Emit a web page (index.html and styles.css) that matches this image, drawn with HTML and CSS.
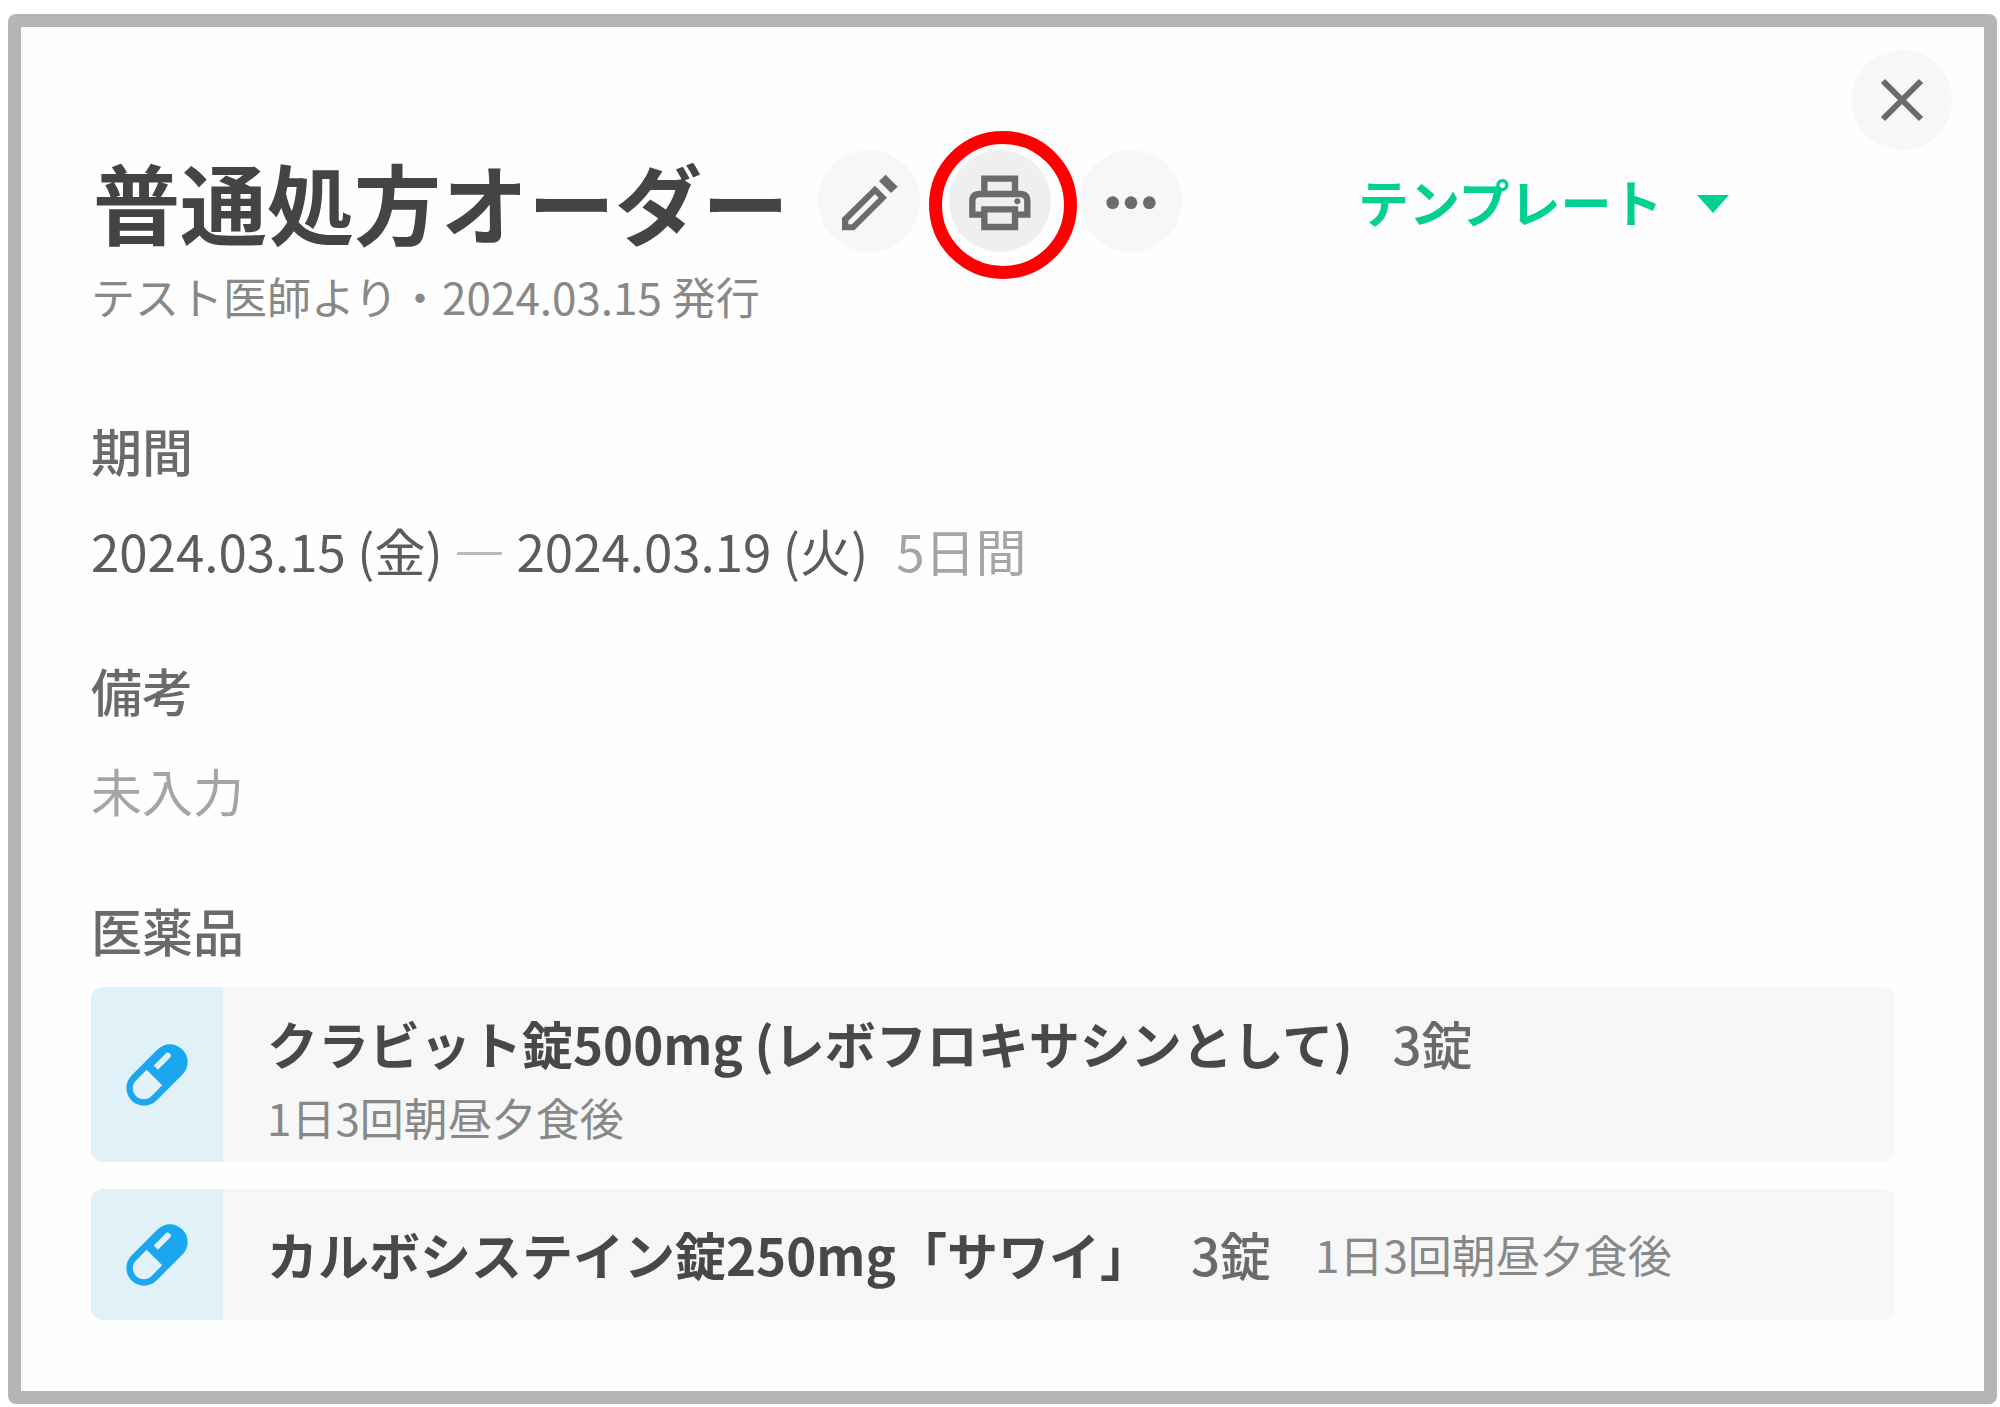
FILE: index.html
```html
<!DOCTYPE html>
<html lang="ja">
<head>
<meta charset="utf-8">
<meta name="viewport" content="width=device-width, initial-scale=1">
<title>普通処方オーダー</title>
<link rel="stylesheet" href="styles.css">
</head>
<body>
<svg class="sprite" aria-hidden="true">
  <symbol id="pill" viewBox="-96 -96 192 192">
    <g transform="rotate(-45)">
      <rect x="-108" y="-53" width="216" height="106" rx="53" fill="#1ba7f0"/>
      <path d="M-11 -33H-56A33 33 0 0 0 -56 33H-11Z" fill="#e2f2fa"/>
      <path d="M13 -27H60A8 8 0 0 1 66 -9H13Z" fill="#e2f2fa"/>
    </g>
  </symbol>
</svg>
<main class="dialog">
  <div class="dialog-bar">
    <button class="round-button close-button" type="button" aria-label="閉じる">
      <svg class="icon" viewBox="0 0 74 74" aria-hidden="true"><path d="M18 18L56 56M56 18L18 56" fill="none" stroke="#6b6b6b" stroke-width="6"/></svg>
    </button>
  </div>
  <div class="dialog-body">
    <header class="order-header">
      <h1 class="order-title">普通処方オーダー</h1>
      <div class="actions">
        <button class="round-button" type="button" aria-label="編集">
          <svg class="icon" viewBox="0 0 222 222" aria-hidden="true"><path fill="#6b6b6b" fill-rule="evenodd" d="M30 199V162L129 65L165 101L67 199ZM49 181H60L140 101L129 90L49 170ZM141 51L161 32L197 68L177 87Z"/></svg>
        </button>
        <button class="round-button print-button" type="button" aria-label="印刷">
          <svg class="icon" viewBox="0 0 222 222" aria-hidden="true"><g fill="none" stroke="#6b6b6b" stroke-width="19"><path d="M64 90V44H156V90"/><path d="M64 152H28V112Q28 90 50 90H171Q193 90 193 112V152H156"/><path d="M64 136H156V189H64Z"/></g><circle cx="163" cy="112" r="9" fill="#6b6b6b"/></svg>
        </button>
        <button class="round-button" type="button" aria-label="その他">
          <svg class="icon" viewBox="0 0 222 222" aria-hidden="true"><g fill="#6b6b6b"><circle cx="56" cy="116" r="19"/><circle cx="111" cy="116" r="19"/><circle cx="166" cy="116" r="19"/></g></svg>
        </button>
      </div>
      <button class="template-button" type="button">テンプレート<svg class="caret" viewBox="0 0 32 18" aria-hidden="true"><path d="M0 0H32L16 18Z" fill="#00d092"/></svg></button>
    </header>
    <p class="issued">テスト医師より・2024.03.15 発行</p>

    <section class="field">
      <h2 class="label">期間</h2>
      <p class="value">2024.03.15 (金) <span class="dash"></span> 2024.03.19 (火)<span class="muted days">5日間</span></p>
    </section>
    <section class="field">
      <h2 class="label">備考</h2>
      <p class="value muted">未入力</p>
    </section>
    <section class="medicines">
      <h2 class="label">医薬品</h2>
      <ul class="cards">
        <li class="card">
          <span class="card-icon"><svg class="pill" aria-hidden="true"><use href="#pill"/></svg></span>
          <div class="card-text stacked">
            <p class="drug"><span class="name">クラビット錠500mg (レボフロキサシンとして)</span><span class="amount">3錠</span></p>
            <p class="usage">1日3回朝昼夕食後</p>
          </div>
        </li>
        <li class="card">
          <span class="card-icon"><svg class="pill" aria-hidden="true"><use href="#pill"/></svg></span>
          <div class="card-text inline">
            <p class="drug"><span class="name">カルボシステイン錠250mg「サワイ」</span><span class="amount">3錠</span></p>
            <p class="usage">1日3回朝昼夕食後</p>
          </div>
        </li>
      </ul>
    </section>
  </div>
</main>
</body>
</html>
```
FILE: styles.css
```css
*,
*::after {
  box-sizing: border-box;
}

body {
  margin: 0;
  padding: 14px 3px 4px 8px;
  background: #fff;
  color: #5c5c5c;
  font-family: "Noto Sans CJK JP", sans-serif;
  font-size: 51px;
  line-height: 72px;
}

h1, h2, p, ul {
  margin: 0;
  padding: 0;
}

.sprite {
  display: none;
}

.dialog {
  border: 13px solid #b5b5b5;
  border-radius: 8px;
  background: #fefefe;
}

.dialog-bar {
  display: flex;
  justify-content: flex-end;
  padding: 23px 32px 0;
}

.dialog-body {
  padding: 0 89px 71px 70px;
}

.order-header {
  padding-left: 2px;
}

.round-button {
  position: relative;
  display: grid;
  place-items: center;
  width: 102px;
  height: 102px;
  padding: 0;
  border: 0;
  border-radius: 50%;
  background: #f7f7f7;
}

.close-button {
  width: 100px;
  height: 100px;
}

.icon {
  display: block;
  width: 74px;
  height: 74px;
}

.order-header {
  display: flex;
  align-items: center;
}

.order-title {
  color: #444;
  font-size: 87px;
  font-weight: 700;
  line-height: 102px;
  white-space: nowrap;
}

.actions {
  display: flex;
  gap: 29px;
  margin-left: 29px;
}

.print-button {
  z-index: 1;
  background: #efefef;
}

/* highlight ring over the print button */
.print-button::after {
  content: "";
  position: absolute;
  top: -19px;
  left: -20px;
  width: 148px;
  height: 148px;
  border: 13px solid #f00;
  border-radius: 50%;
}

.template-button {
  display: flex;
  align-items: center;
  gap: 35px;
  margin-left: 176px;
  padding: 0;
  border: 0;
  background: none;
  color: #00d092;
  font: inherit;
  font-weight: 700;
  white-space: nowrap;
}

.caret {
  width: 32px;
  height: 18px;
  margin-top: 6px;
}

.issued {
  margin-top: 12px;
  color: #888;
  font-size: 44px;
  line-height: 64px;
}

.field {
  margin-bottom: 68px;
}

.issued + .field {
  margin-top: 86px;
}

.label {
  color: #6a6a6a;
  font-size: 51px;
  font-weight: 500;
}

.value {
  margin-top: 28px;
}

.muted {
  color: #a5a5a5;
}

.days {
  margin-left: 28px;
}

.dash {
  display: inline-block;
  width: 45px;
  height: 3px;
  margin: 0 3px;
  vertical-align: 17px;
  background: #bbb;
}

.cards {
  display: grid;
  gap: 27px;
  margin-top: 21px;
  list-style: none;
}

.card {
  display: flex;
  overflow: hidden;
  border-radius: 12px;
  background: #f7f7f7;
}

.card-icon {
  display: grid;
  flex: none;
  place-items: center;
  width: 132px;
  background: #e0f1f8;
}

.pill {
  width: 64px;
  height: 64px;
}

.card-text {
  padding: 20px 44px 13px;
}

.stacked .usage {
  margin-top: 6px;
}

.inline {
  display: flex;
  align-items: center;
  gap: 44px;
  padding-block: 29px 30px;
}

.name {
  color: #484848;
  font-weight: 700;
}

.amount {
  margin-left: 40px;
  color: #6a6a6a;
  font-weight: 500;
}

.usage {
  color: #888;
  font-size: 44px;
  line-height: 64px;
}
```
